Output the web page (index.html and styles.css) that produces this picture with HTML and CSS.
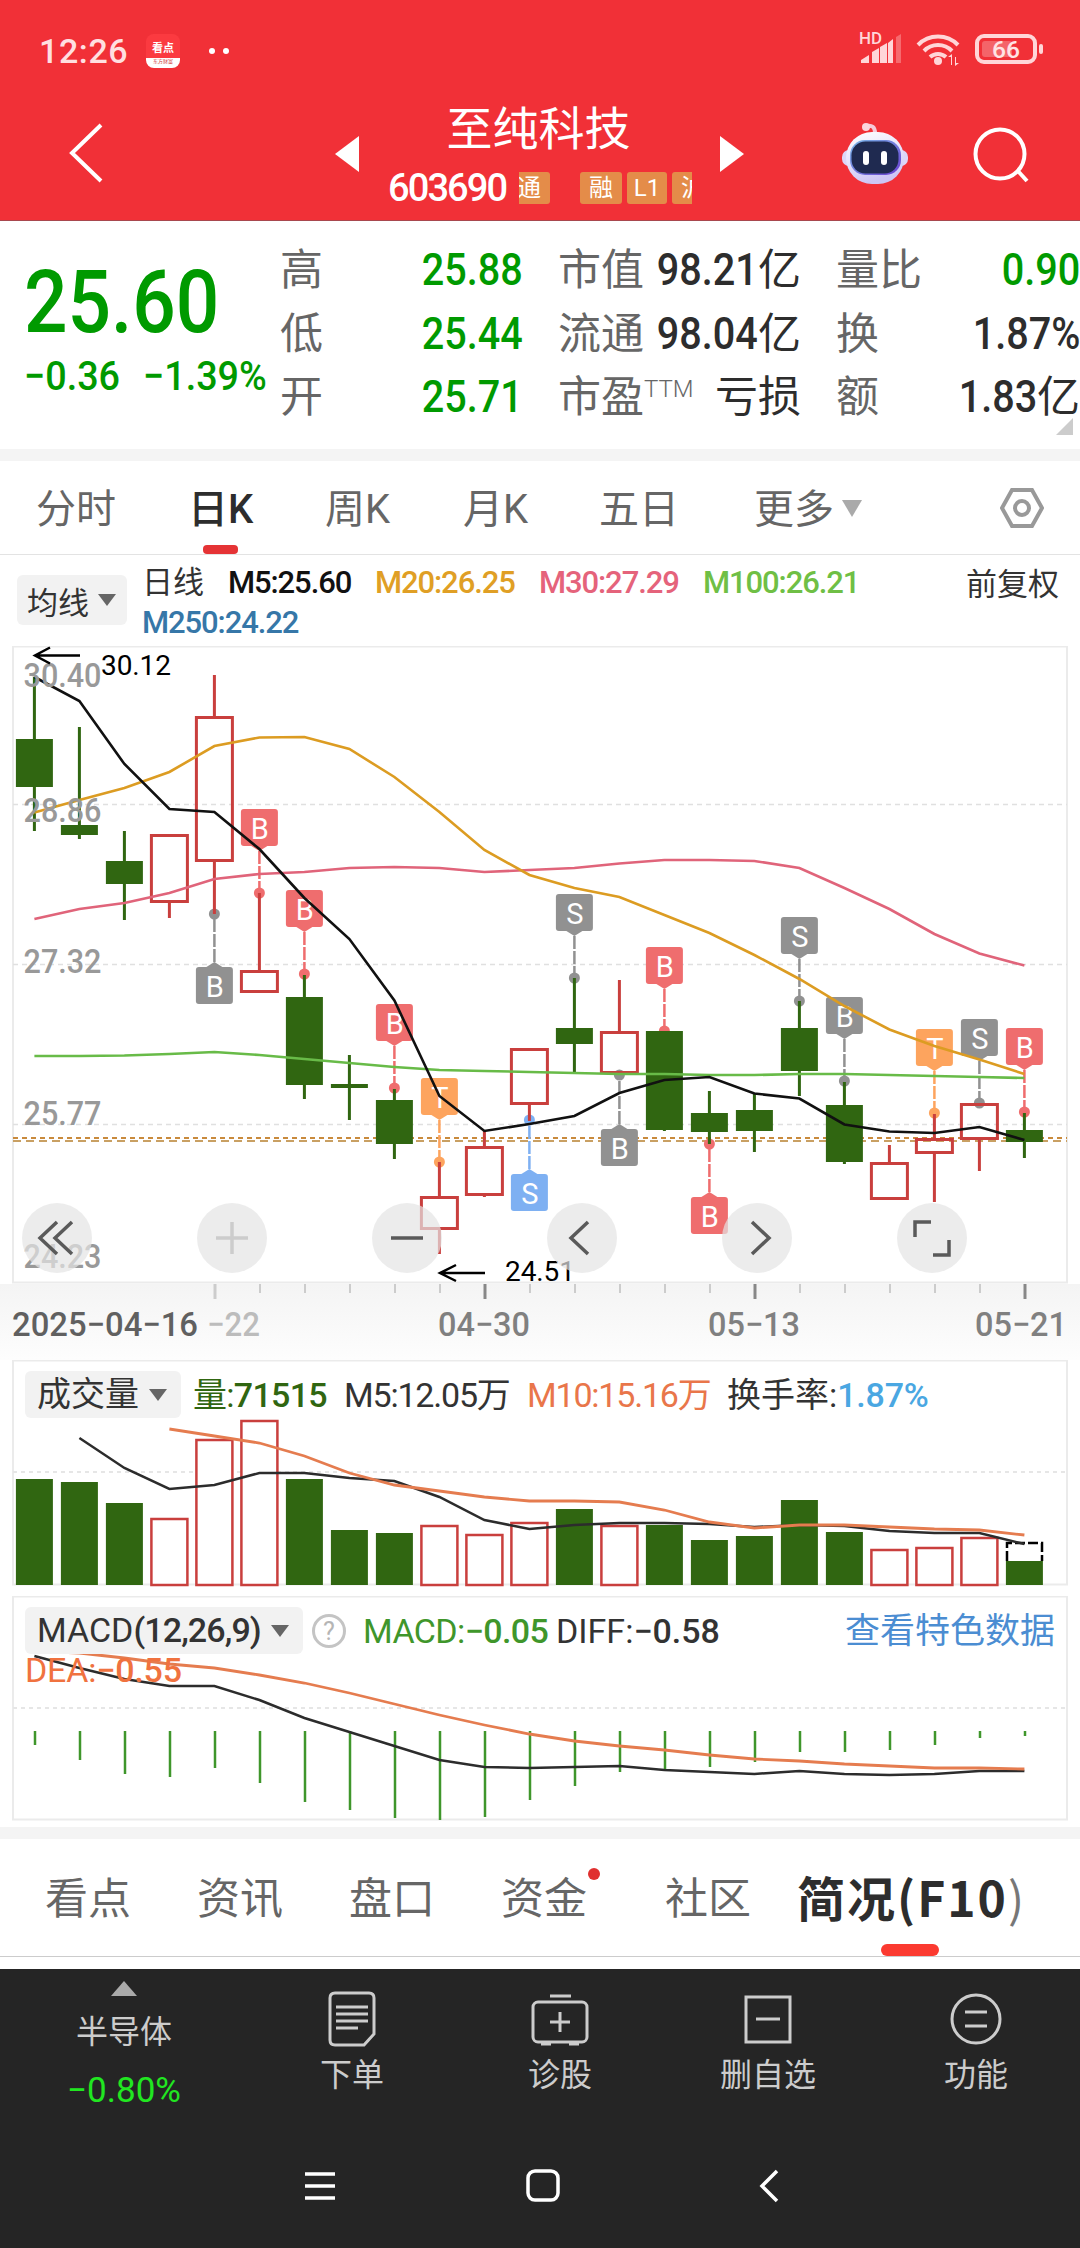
FILE: index.html
```html
<!DOCTYPE html>
<html lang="zh-CN">
<head>
    <meta charset="UTF-8">
    <meta name="viewport" content="width=device-width, initial-scale=1.0">
    <title>至纯科技 603690</title>
    <link rel="stylesheet" href="styles.css">
</head>
<body>
    <header>
        <div class="status">
            <span class="clock">12:26</span>
            <span class="app-icon"><b>看点</b><i>东方财富</i></span>
            <span class="dot"></span><span class="dot"></span>
            <svg class="status-icons" width="190" height="44" viewBox="858 30 190 44">
                <g fill="#ffd6d8">
                    <text x="860" y="45" font-size="16" font-weight="500" textLength="23" lengthAdjust="spacingAndGlyphs">HD</text>
                    <path d="M862 64v-3l8-5v8zM873 64v-11l7-4v15zM881 64v-16l7-4v20zM889 64v-20l5-4v24z"/>
                    <path d="M897 64v-26l5-3v29z" opacity=".35"/>
                    <circle cx="939" cy="62" r="4"/>
                    <path d="M952 66v-8h-3l4-3v11zM956 58v9l4-3h-3v-6z"/>
                </g>
                <g fill="none" stroke="#ffd6d8" stroke-width="4">
                    <path d="M919 46a28 28 0 0 1 40 0M925 52a19.500 19.500 0 0 1 28 0M931 58a12 12 0 0 1 16 0"/>
                    <rect x="978" y="37" width="58" height="26" rx="7"/>
                </g>
                <rect x="983" y="42" width="30" height="16" rx="3" fill="#fff" opacity=".25"/>
                <rect x="1040" y="45" width="4" height="10" rx="2" fill="#ffd6d8"/>
                <text x="993" y="59" font-size="24" font-weight="500" fill="#ffe3e4" textLength="28" lengthAdjust="spacingAndGlyphs">66</text>
            </svg>
        </div>
        <div class="titlebar">
            <svg class="back" width="40" height="64" viewBox="0 0 40 64"><path d="M33 4 4 32l29 28"/></svg>
            <svg class="prev" width="24" height="36" viewBox="0 0 24 36"><path d="M24 0v36L0 18z"/></svg>
            <div class="stock">
                <h1>至纯科技</h1>
                <div class="code">
                    <span class="code-num">603690</span>
                    <div class="tags">
                        <span class="tag t1">通</span>
                        <span class="tag t2">融</span>
                        <span class="tag t3">L1</span>
                        <span class="tag t4">沪</span>
                    </div>
                </div>
            </div>
            <svg class="next" width="24" height="36" viewBox="0 0 24 36"><path d="M0 0v36l24-18z"/></svg>
            <svg class="robot" width="68" height="64" viewBox="841 120 68 64">
                <defs>
                    <linearGradient id="head" x1="0" y1="0" x2=".3" y2="1"><stop offset="0" stop-color="#fff"/><stop offset=".6" stop-color="#e4e0fb"/><stop offset="1" stop-color="#cdc6f4"/></linearGradient>
                    <linearGradient id="visor" x1="0" y1="0" x2="1" y2="1"><stop offset="0" stop-color="#7ab8e8"/><stop offset="1" stop-color="#6a3fd0"/></linearGradient>
                </defs>
                <path d="M866 125q9-2 9 7" fill="none" stroke="#f5c9d8" stroke-width="4"/>
                <circle cx="866" cy="126" r="4" fill="#fbd5dc"/>
                <rect x="842" y="149" width="66" height="16" rx="7" fill="#dcd6f8"/>
                <rect x="846" y="131" width="58" height="52" rx="26" fill="url(#head)"/>
                <rect x="850" y="139" width="51" height="35" rx="15" fill="url(#visor)"/>
                <rect x="851.500" y="140.500" width="47" height="32" rx="14" fill="#1f2a50"/>
                <rect x="863" y="150" width="6" height="14" rx="3" fill="#fff"/>
                <rect x="881" y="150" width="6" height="14" rx="3" fill="#fff"/>
            </svg>
            <svg class="search" width="58" height="58" viewBox="0 0 58 58"><circle cx="28" cy="28" r="24.500"/><path d="M45 44l10 11"/></svg>
        </div>
    </header>

    <section class="quote">
        <div class="price-box">
            <div class="price">25.60</div>
            <div class="change"><span>−0.36</span><span>−1.39%</span></div>
        </div>
        <dl class="c2">
            <div><dt>高</dt><dd class="green"><b>25.88</b></dd></div>
            <div><dt>低</dt><dd class="green"><b>25.44</b></dd></div>
            <div><dt>开</dt><dd class="green"><b>25.71</b></dd></div>
        </dl>
        <dl class="c3">
            <div><dt>市值</dt><dd><b>98.21</b>亿</dd></div>
            <div><dt>流通</dt><dd><b>98.04</b>亿</dd></div>
            <div><dt>市盈<sup>TTM</sup></dt><dd>亏损</dd></div>
        </dl>
        <dl class="c4">
            <div><dt>量比</dt><dd class="green"><b>0.90</b></dd></div>
            <div><dt>换</dt><dd><b>1.87%</b></dd></div>
            <div><dt>额</dt><dd><b>1.83</b>亿</dd></div>
        </dl>
        <span class="corner"></span>
    </section>

    <nav class="periods">
        <span>分时</span>
        <span class="active">日K</span>
        <span>周K</span>
        <span>月K</span>
        <span>五日</span>
        <span>更多<i class="tri"></i></span>
        <svg width="44" height="44" viewBox="0 0 44 44"><path d="M12 4h20l10 18-10 18H12L2 22z"/><circle cx="22" cy="22" r="7"/></svg>
    </nav>

    <div class="ma-bar">
        <span class="picker">均线<i class="tri"></i></span>
        <div class="ma-values">
            <span>日线</span>
            <span class="black">M5:25.60</span>
            <span class="gold">M20:26.25</span>
            <span class="pink">M30:27.29</span>
            <span class="lime">M100:26.21</span>
            <span class="blue">M250:24.22</span>
        </div>
        <span class="adjust">前复权</span>
    </div>

    <div class="kline">
        <svg id="kline" width="1080" height="638" viewBox="0 646 1080 638"></svg>
        <div class="tools">
            <button><svg viewBox="0 0 70 70"><path d="M35 19 18 35l17 16M50 19 33 35l17 16"/></svg></button>
            <button class="off"><svg viewBox="0 0 70 70"><path d="M35 19v32M19 35h32"/></svg></button>
            <button><svg viewBox="0 0 70 70"><path d="M19 35h32"/></svg></button>
            <button><svg viewBox="0 0 70 70"><path d="M41 19 24 35l17 16"/></svg></button>
            <button><svg viewBox="0 0 70 70"><path d="M30 19l17 16-17 16"/></svg></button>
            <button><svg viewBox="0 0 70 70"><path d="M18 34V19h16M52 37v15H36"/></svg></button>
        </div>
    </div>
    <svg id="axis" class="axis" width="1080" height="76" viewBox="0 1284 1080 76"></svg>

    <div class="panel volume">
        <svg id="volume" width="1080" height="236" viewBox="0 1360 1080 236"></svg>
        <div class="panel-head">
            <span class="picker">成交量<i class="tri"></i></span>
            <span class="v1">量:<b>71515</b></span>
            <span class="v2">M5:12.05万</span>
            <span class="v3">M10:15.16万</span>
            <span class="v4">换手率:<em>1.87%</em></span>
        </div>
    </div>

    <div class="panel macd">
        <svg id="macd" width="1080" height="231" viewBox="0 1596 1080 231"></svg>
        <div class="panel-head">
            <span class="picker">MACD<b>(12,26,9)</b><i class="tri"></i></span>
            <span class="help">?</span>
            <span class="m1">MACD:<b>−0.05</b></span>
            <span class="m2">DIFF:<b>−0.58</b></span>
            <span class="m3">查看特色数据</span>
        </div>
        <div class="dea">DEA:<b>−0.55</b></div>
    </div>

    <nav class="info-tabs">
        <span>看点</span>
        <span>资讯</span>
        <span>盘口</span>
        <span class="new">资金</span>
        <span>社区</span>
        <span class="active">简况(F10<small>)</small></span>
    </nav>

    <footer>
        <div class="actions">
            <div class="sector"><i class="up"></i><span>半导体</span><em>−0.80%</em></div>
            <div>
                <svg width="50" height="56" viewBox="0 0 50 56"><path d="M8 2h34q5 0 5 5v36L37 54H8q-5 0-5-5V7q0-5 5-5zM9 16h32M9 23h32M9 30h32M9 37h22"/></svg>
                <span>下单</span>
            </div>
            <div>
                <svg width="58" height="56" viewBox="0 0 58 56"><rect x="2" y="11" width="54" height="40" rx="5"/><path d="M19 5h21M29 21v20M19 31h20M10 53h10M38 53h10"/></svg>
                <span>诊股</span>
            </div>
            <div>
                <svg width="50" height="56" viewBox="0 0 50 56"><rect x="3" y="6" width="44" height="45"/><path d="M13 28h24"/></svg>
                <span>删自选</span>
            </div>
            <div>
                <svg width="52" height="56" viewBox="0 0 52 56"><circle cx="26" cy="28" r="24"/><path d="M15 21h22M15 35h22"/></svg>
                <span>功能</span>
            </div>
        </div>
        <div class="sysnav">
            <svg width="30" height="30" viewBox="0 0 30 30"><path d="M0 3h30M0 15h30M0 27h30"/></svg>
            <svg width="34" height="34" viewBox="0 0 34 34"><rect x="2" y="2" width="30" height="29" rx="7"/></svg>
            <svg class="sysback" width="20" height="34" viewBox="0 0 20 34"><path d="M18 2 3 17l15 15"/></svg>
        </div>
    </footer>

    <script>
        const STEP = 45;
        const X0 = 34.4;
        const GREEN = '#306611';
        const RED = '#c93f3d';
        const x = i => X0 + i * STEP;

        // [up, high, top, bottom, low]
        const candles = [
            [0, 677, 739, 787, 831], [0, 727, 825, 835, 839], [0, 831, 861, 884, 920],
            [1, 834, 834, 903, 918], [1, 675, 716, 862, 914], [1, 893, 970, 993, 993],
            [0, 975, 997, 1085, 1099], [0, 1055, 1084, 1088, 1120], [0, 1089, 1100, 1144, 1159],
            [1, 1162, 1196, 1230, 1254], [1, 1131, 1146, 1196, 1197], [1, 1048, 1048, 1105, 1121],
            [0, 978, 1028, 1044, 1072], [1, 980, 1031, 1074, 1074], [0, 1031, 1031, 1130, 1131],
            [0, 1091, 1113, 1132, 1144], [0, 1094, 1110, 1131, 1152], [0, 1001, 1028, 1071, 1096],
            [0, 1082, 1105, 1162, 1164], [1, 1145, 1162, 1200, 1200], [1, 1114, 1138, 1154, 1202],
            [1, 1103, 1103, 1140, 1171], [0, 1113, 1130, 1142, 1158]
        ];
        const averages = {
            '#68bb48': [1056, 1056, 1055.5, 1054, 1052, 1055, 1059, 1063, 1067, 1070, 1071, 1072, 1073, 1074, 1074, 1075, 1075, 1074, 1074, 1075, 1076, 1077, 1078],
            '#e0647a': [919, 909, 903, 893, 879, 874, 872, 868, 867, 868, 872, 870, 868, 863.5, 860, 860, 861, 868, 888, 909, 934, 953.5, 965.5],
            '#dc9c22': [812.5, 800, 788, 772, 746, 737.5, 737, 749, 777, 812, 850, 875, 888, 897, 915, 933, 955, 979, 1006, 1029.5, 1046, 1059.5, 1074],
            '#111': [677, 701, 764, 809, 812, 849, 898, 939, 1000.5, 1096, 1131, 1124, 1116, 1093, 1080, 1077, 1093.5, 1098.5, 1124.5, 1131.5, 1133, 1127, 1140]
        };
        const colors = { gray: '#919191', red: '#ef6d6e', orange: '#fda45e', blue: '#7eb0f2' };
        // [index, letter, color, box top, dot y]
        const signals = [
            [4, 'B', 'gray', 967, 914], [5, 'B', 'red', 809, 893], [6, 'B', 'red', 890, 974],
            [8, 'B', 'red', 1004, 1088], [9, 'T', 'orange', 1078, 1162], [11, 'S', 'blue', 1174, 1120],
            [12, 'S', 'gray', 894, 978], [13, 'B', 'gray', 1129, 1075], [14, 'B', 'red', 947, 1031],
            [15, 'B', 'red', 1197, 1144], [17, 'S', 'gray', 917, 1001], [18, 'B', 'gray', 997, 1081],
            [20, 'T', 'orange', 1029, 1113], [21, 'S', 'gray', 1019, 1103], [22, 'B', 'red', 1028, 1112]
        ];

        function line(values, color, width, from = 0) {
            const points = values.map((v, i) => `${x(i + from)},${v}`).join(' ');
            return `<polyline points="${points}" fill="none" stroke="${color}" stroke-width="${width}"/>`;
        }

        function drawKline() {
            let s = '<rect x="13" y="646.500" width="1054" height="636" fill="none" stroke="#ebebeb" stroke-width="2"/>';
            for (const y of [804.5, 964.5, 1124.5]) {
                s += `<path d="M13 ${y}H1067" stroke="#e0e0e0" stroke-width="1.500" stroke-dasharray="5 4"/>`;
            }
            s += '<path d="M13 1138H1067" stroke="#c98a3c" stroke-width="2" stroke-dasharray="5 4"/>';
            s += '<path d="M13 1141H1067" stroke="#c9a063" stroke-width="2" stroke-dasharray="8 5"/>';

            for (const [i, letter, name, top, dot] of signals) {
                const c = colors[name];
                const above = top < dot;
                const edge = above ? top + 37 : top;
                const tip = above ? edge + 5 : edge - 5;
                s += `<path d="M${x(i)} ${tip}V${dot}" stroke="${c}" stroke-width="2.500" stroke-dasharray="13 2"/>`;
                s += `<circle cx="${x(i)}" cy="${dot}" r="5.500" fill="${c}"/>`;
                s += `<rect x="${x(i) - 18.5}" y="${top}" width="37" height="37" rx="3" fill="${c}"/>`;
                s += `<path d="M${x(i) - 8} ${edge}h16L${x(i)} ${tip}z" fill="${c}"/>`;
                s += `<text class="signal" x="${x(i) + 0.5}" y="${top + 29.5}">${letter}</text>`;
            }
            candles.forEach(([up, high, top, bottom, low], i) => {
                const c = up ? RED : GREEN;
                s += `<path d="M${x(i)} ${high}V${top}M${x(i)} ${bottom}V${low}" stroke="${c}" stroke-width="3"/>`;
                s += up
                    ? `<rect x="${x(i) - 18}" y="${top + 1.5}" width="36" height="${bottom - top - 3}" fill="none" stroke="${c}" stroke-width="3"/>`
                    : `<rect x="${x(i) - 18.5}" y="${top}" width="37" height="${bottom - top}" fill="${c}"/>`;
            });
            for (const color in averages) s += line(averages[color], color, 2.6);

            [['30.40', 687], ['28.86', 822], ['27.32', 973], ['25.77', 1125], ['24.23', 1268]].forEach(([t, y]) => {
                s += `<text class="scale" x="23.500" y="${y}" textLength="78" lengthAdjust="spacingAndGlyphs">${t}</text>`;
            });
            s += '<path d="M80 655.500H35M50 647.500 35 655.500l15 8M485 1273H440M456 1265l-16 8 16 8" fill="none" stroke="#000" stroke-width="2.500"/>';
            s += '<text class="extreme" x="101" y="675" textLength="70">30.12</text>';
            s += '<text class="extreme" x="505" y="1281" textLength="70">24.51</text>';
            document.getElementById('kline').innerHTML = s;
        }

        function drawAxis() {
            let s = '';
            for (let i = 4; i < 23; i++) {
                const major = (i - 4) % 6 === 0;
                const stroke = major && i > 4 ? '#888' : '#ccc';
                s += `<path d="M${x(i) + 0.6} 1284v${major ? 15 : 9}" stroke="${stroke}" stroke-width="${major ? 3 : 2}"/>`;
            }
            s += '<text class="faint" x="207" y="1336" textLength="53" lengthAdjust="spacingAndGlyphs">−22</text>';
            s += '<text class="first" x="12" y="1336" textLength="186" lengthAdjust="spacingAndGlyphs">2025−04−16</text>';
            s += '<text x="438" y="1336" textLength="92" lengthAdjust="spacingAndGlyphs">04−30</text>';
            s += '<text x="708" y="1336" textLength="92" lengthAdjust="spacingAndGlyphs">05−13</text>';
            s += '<text x="975" y="1336" textLength="92" lengthAdjust="spacingAndGlyphs">05−21</text>';
            document.getElementById('axis').innerHTML = s;
        }

        function drawVolume() {
            const tops = [1479, 1482, 1503, 1519, 1440, 1421, 1479, 1530, 1533, 1526, 1535, 1523, 1509, 1526, 1525, 1540, 1536, 1500, 1532, 1550, 1548, 1538, 1561];
            const m5 = [1438, 1468, 1489, 1485, 1473, 1473, 1478, 1481, 1497, 1520, 1529, 1525, 1523, 1523, 1524, 1527, 1525, 1526, 1531, 1533, 1533, 1544];
            const m10 = [1429, 1436, 1443, 1456, 1473, 1485, 1491, 1497, 1501, 1501, 1502, 1510, 1522, 1528, 1525, 1525, 1527, 1529, 1530, 1535];
            let s = '<rect x="13" y="1360.500" width="1054" height="224" fill="none" stroke="#ebebeb" stroke-width="2"/>';
            s += '<path d="M13 1472H1067" stroke="#e6e6e6" stroke-width="2" stroke-dasharray="4 4"/>';
            tops.forEach((top, i) => {
                s += candles[i][0]
                    ? `<rect x="${x(i) - 18}" y="${top}" width="36" height="${1585 - top}" fill="#fff" stroke="${RED}" stroke-width="2.500"/>`
                    : `<rect x="${x(i) - 18.5}" y="${top}" width="37" height="${1585 - top}" fill="${GREEN}"/>`;
            });
            // estimated volume for the running day
            s += '<path d="M1007 1561V1543H1042V1561" fill="none" stroke="#000" stroke-width="2.500" stroke-dasharray="10 3"/>';
            s += line(m5, '#2c2c2c', 2.5, 1);
            s += line(m10, '#e57c4f', 2.8, 3);
            document.getElementById('volume').innerHTML = s;
        }

        function drawMacd() {
            const bars = [1745, 1760, 1774, 1777, 1768, 1783, 1802, 1810, 1818, 1820, 1817, 1800, 1786, 1772, 1770, 1767, 1762, 1752, 1752, 1750, 1745, 1738, 1736];
            const diff = [1656, 1668, 1679, 1686, 1686, 1700, 1718, 1732, 1746, 1760, 1767, 1768, 1767, 1766, 1770, 1772, 1774, 1771, 1774, 1775, 1774, 1771, 1771];
            const dea = [1651, 1653, 1658, 1664, 1668, 1675, 1683, 1693, 1704, 1715, 1725, 1734, 1741, 1746, 1750, 1755, 1759, 1761, 1764, 1766, 1768, 1768, 1769];
            let s = '<rect x="13" y="1596.500" width="1054" height="223" fill="none" stroke="#ebebeb" stroke-width="2"/>';
            s += '<path d="M13 1708H1067" stroke="#e6e6e6" stroke-width="2" stroke-dasharray="4 4"/>';
            bars.forEach((end, i) => {
                s += `<path d="M${x(i) + 0.6} 1731V${end}" stroke="#3f962b" stroke-width="2.500"/>`;
            });
            s += line(diff, '#2c2c2c', 2.5);
            s += line(dea, '#e57c4f', 2.8);
            document.getElementById('macd').innerHTML = s;
        }

        drawKline();
        drawAxis();
        drawVolume();
        drawMacd();
    </script>
</body>
</html>
```
FILE: styles.css
```css
* { box-sizing: border-box; }
body {
    margin: 0;
    width: 1080px;
    height: 2248px;
    overflow: hidden;
    background: #fff;
    color: #333;
    font-family: Roboto, "Noto Sans CJK SC", sans-serif;
    white-space: nowrap;
}
h1, dl, dd { margin: 0; }
i, em { font-style: normal; }
svg { display: block; flex: none; }
.green { color: #009a00; }
.black { color: #111; }
.gold { color: #e09f25; }
.pink { color: #e5637b; }
.lime { color: #6fbf45; }
.blue { color: #3677a8; }
.tri {
    display: inline-block;
    border: 9px solid transparent;
    border-top: 12px solid #666;
    border-bottom: 0;
}

/* header */
header {
    height: 221px;
    background: #f13037;
    border-bottom: 1px solid #a8474e;
    color: #fff;
}
.status {
    display: flex;
    align-items: center;
    height: 100px;
    padding: 2px 33px 0 39px;
}
.clock {
    width: 107px;
    font-size: 34px;
    font-weight: 500;
    color: #ffdfe0;
    letter-spacing: 0.6px;
}
.app-icon {
    display: flex;
    flex-direction: column;
    width: 34px;
    height: 34px;
    margin-right: 29px;
    border-radius: 8px;
    background: linear-gradient(#fb3a40 0 24px, #fff 24px);
    text-align: center;
}
.app-icon b {
    font-size: 11px;
    line-height: 13px;
    margin-top: 8px;
}
.app-icon i {
    font-size: 5px;
    line-height: 13px;
    color: #c33;
}
.dot {
    width: 6px;
    height: 6px;
    margin-right: 8px;
    border-radius: 50%;
    background: #fff;
}
.status-icons { margin-left: auto; }
.titlebar {
    display: flex;
    align-items: flex-start;
    height: 120px;
}
.titlebar path, .search circle { fill: #fff; }
.titlebar .back { margin: 21px 0 0 68px; }
.titlebar .back path, .search circle, .titlebar .search path {
    fill: none;
    stroke: #fff;
    stroke-width: 4;
}
.titlebar .robot path { fill: none; }
.prev { margin: 36px 0 0 227px; }
.next { margin: 36px 0 0 28px; }
.robot { margin: 21px 0 0 97px; }
.search { margin: 26px 0 0 63px; }
.stock { width: 304px; margin-left: 29px; }
h1 {
    margin-top: 2px;
    font-size: 46px;
    line-height: 54px;
    font-weight: 400;
    text-align: center;
    text-indent: -3px;
}
.code {
    display: flex;
    align-items: center;
    margin-top: 16px;
    height: 32px;
}
.code-num {
    width: 131px;
    font-size: 38px;
    font-weight: 500;
    line-height: 34px;
    letter-spacing: -1.9px;
}
.tags {
    display: flex;
    width: 173px;
    overflow: hidden;
}
.tag {
    flex: none;
    height: 32px;
    border-radius: 3px;
    background: #e48c49;
    font-size: 24px;
    line-height: 32px;
    text-align: center;
}
.t1 { width: 42px; margin: 0 30px 0 -11px; }
.t2 { width: 42px; margin-right: 5px; }
.t3 { width: 40px; margin-right: 5px; }
.t4 { width: 42px; }

/* quote */
.quote {
    display: flex;
    position: relative;
    height: 240px;
    padding-top: 18px;
    border-bottom: 12px solid #f4f4f4;
}
.price-box {
    width: 280px;
    padding-left: 24px;
    color: #009a00;
}
.price {
    margin-top: 17px;
    font-size: 88px;
    font-weight: 500;
    line-height: 92px;
    transform: scaleX(0.87);
    transform-origin: left;
}
.change {
    display: flex;
    font-size: 41px;
    font-weight: 500;
    line-height: 56px;
}
.change span {
    width: 119px;
    transform: scaleX(0.92);
    transform-origin: left;
}
.quote dl > div {
    display: flex;
    justify-content: space-between;
    height: 63.5px;
    line-height: 62px;
    font-size: 43px;
}
.quote dt { color: #666; }
.quote dd { display: flex; }
.quote dd:not(.green) { color: #2d2d2d; }
.quote dd b {
    font-size: 45px;
    font-weight: 500;
    transform: scaleX(0.88);
    transform-origin: right;
}
.quote sup {
    font-size: 24px;
    line-height: 0;
    vertical-align: 15px;
    font-weight: 300;
}
.c2 { width: 243px; }
.c3 { width: 243px; margin-left: 35px; }
.c4 { width: 244px; margin-left: 35px; }
.c3 dd, .c4 dd { margin-left: -30px; }
.corner {
    position: absolute;
    right: 7px;
    bottom: 14px;
    border-left: 17px solid transparent;
    border-bottom: 17px solid #ccc;
}

/* period tabs */
.periods {
    display: flex;
    position: relative;
    height: 94px;
    border-bottom: 1px solid #e3e3e3;
    font-size: 40px;
    line-height: 97px;
    color: #666;
}
.periods span { position: relative; }
.periods span:nth-child(1) { width: 152px; margin-left: 36px; }
.periods span:nth-child(2) { width: 137px; }
.periods span:nth-child(3) { width: 138px; }
.periods span:nth-child(4) { width: 136px; }
.periods span:nth-child(5) { width: 155px; }
.periods span:nth-child(6) { width: 246px; }
.periods svg {
    margin-top: 25px;
    fill: none;
    stroke: #999;
    stroke-width: 4;
}
.periods .active { color: #2d2d2d; font-weight: 500; }
.periods .active::after {
    content: "";
    position: absolute;
    left: 15px;
    bottom: 0;
    width: 35px;
    height: 9px;
    border-radius: 4px;
    background: #e53335;
}
.periods .tri {
    margin-left: 8px;
    vertical-align: 6px;
    border-width: 17px 10px 0;
    border-top-color: #aaa;
}

/* moving averages */
.ma-bar {
    display: flex;
    height: 91px;
    font-size: 31px;
}
.picker {
    display: flex;
    flex: none;
    align-items: center;
    justify-content: space-between;
    border-radius: 6px;
    background: #f2f2f2;
}
.ma-bar .picker {
    width: 110px;
    height: 50px;
    margin: 20px 0 0 17px;
    padding: 0 11px 0 10px;
}
.ma-values {
    display: grid;
    grid-template-columns: 86px 147px 164px 164px 200px;
    grid-template-rows: 40px 38px;
    width: 761px;
    margin: 8px 0 0 15px;
    line-height: 40px;
    letter-spacing: -1.1px;
}
.ma-values span:nth-child(n + 2) { font-weight: 500; }
.ma-values span:nth-child(1) { letter-spacing: 0; }
.adjust { margin-left: 63px; line-height: 59px; }

/* k-line chart */
.kline { position: relative; height: 638px; }
.tools {
    display: flex;
    position: absolute;
    left: 22px;
    bottom: 11px;
    gap: 105px;
}
.tools button {
    width: 70px;
    height: 70px;
    padding: 0;
    border: 0;
    border-radius: 50%;
    background: rgba(228, 228, 228, 0.7);
}
.tools path { fill: none; stroke: #5a5a5a; stroke-width: 3.5; }
.tools .off path { stroke: #ccc; }
.signal {
    font-size: 29px;
    fill: #fff;
    text-anchor: middle;
}
.scale { font-size: 34px; font-weight: 500; fill: #999; }
.extreme { font-size: 28px; fill: #000; }
.axis {
    background: linear-gradient(#f4f4f4, #fdfdfd);
    font-size: 34px;
}
.axis text { fill: #808080; font-weight: 500; }
.axis .first { fill: #606060; }
.axis .faint { fill: #bcbcbc; }

/* indicator panels */
.panel { position: relative; }
.volume { height: 236px; }
.macd { height: 231px; }
.panel-head {
    display: flex;
    position: absolute;
    left: 25px;
    top: 11px;
    line-height: 49px;
    font-size: 34px;
}
.panel b { font-weight: 500; }
.panel-head .picker { height: 47px; padding: 0 14px 0 12px; }
.volume .picker { width: 156px; }
.v1 { width: 151px; margin-left: 12px; color: #306611; letter-spacing: -0.7px; }
.v2 { width: 183px; letter-spacing: -1.2px; }
.v3 { width: 200px; color: #e9764a; letter-spacing: -1.2px; }
.v4 em { color: #4aa7e2; letter-spacing: -0.2px; font-weight: 500; }
.macd .picker { width: 278px; }
.macd .picker b { letter-spacing: -0.9px; margin-right: auto; }
.help {
    width: 34px;
    height: 34px;
    margin: 7px 0 0 9px;
    border: 3px solid #c4c4c4;
    border-radius: 50%;
    font-size: 25px;
    line-height: 29px;
    text-align: center;
    color: #b5b5b5;
}
.m1 { width: 193px; margin-left: 17px; color: #3f962b; letter-spacing: -0.6px; }
.m2 { width: 289px; letter-spacing: 0; }
.m3 { font-size: 35px; color: #4b8dd2; }
.dea {
    position: absolute;
    left: 25px;
    top: 53px;
    font-size: 34px;
    line-height: 42px;
    color: #f0723f;
    letter-spacing: -0.2px;
}

/* info tabs */
.info-tabs {
    display: flex;
    height: 130px;
    border-top: 12px solid #f4f4f4;
    border-bottom: 1px solid #ccc;
    font-size: 43px;
    line-height: 121px;
    color: #666;
}
.info-tabs span { position: relative; width: 152px; }
.info-tabs span:first-child { margin-left: 45px; }
.info-tabs .new { width: 164px; }
.info-tabs .new::after {
    content: "";
    position: absolute;
    left: 87px;
    top: 29px;
    width: 12px;
    height: 12px;
    border-radius: 50%;
    background: #e0302f;
}
.info-tabs span:nth-child(5) { width: 132px; }
.info-tabs .active {
    width: auto;
    height: 117px;
    font-family: "Noto Sans CJK SC", sans-serif;
    font-size: 48px;
    font-weight: 700;
    line-height: 114px;
    letter-spacing: 2px;
    color: #2d2d2d;
}
.info-tabs small { font-size: 48px; font-weight: 400; color: #777; }
.info-tabs .active::after {
    content: "";
    position: absolute;
    left: 84px;
    bottom: 0;
    width: 58px;
    height: 12px;
    border-radius: 6px;
    background: #fb3a30;
}

/* bottom bars */
footer {
    height: 279px;
    margin-top: 12px;
    background: #252525;
    color: #ccc;
}
.actions { display: flex; height: 180px; }
.actions > div {
    display: flex;
    flex-direction: column;
    align-items: center;
    width: 208px;
    padding-top: 22px;
    font-size: 32px;
    line-height: 40px;
}
.actions span { margin-top: 8px; }
.actions svg { fill: none; stroke: #ccc; stroke-width: 3; }
.actions .sector {
    width: 248px;
    padding-top: 12px;
}
.sector .up {
    border: 13px solid transparent;
    border-top: 0;
    border-bottom: 15px solid #aaa;
}
.actions .sector span { margin-top: 16px; }
.sector em { margin-top: 19px; font-size: 35px; color: #21e621; }
.sysnav {
    display: flex;
    align-items: center;
    height: 74px;
    padding-left: 305px;
    gap: 191px;
}
.sysnav svg { fill: none; stroke: #fff; stroke-width: 3.5; }
.sysback { margin-left: 8px; }
```
